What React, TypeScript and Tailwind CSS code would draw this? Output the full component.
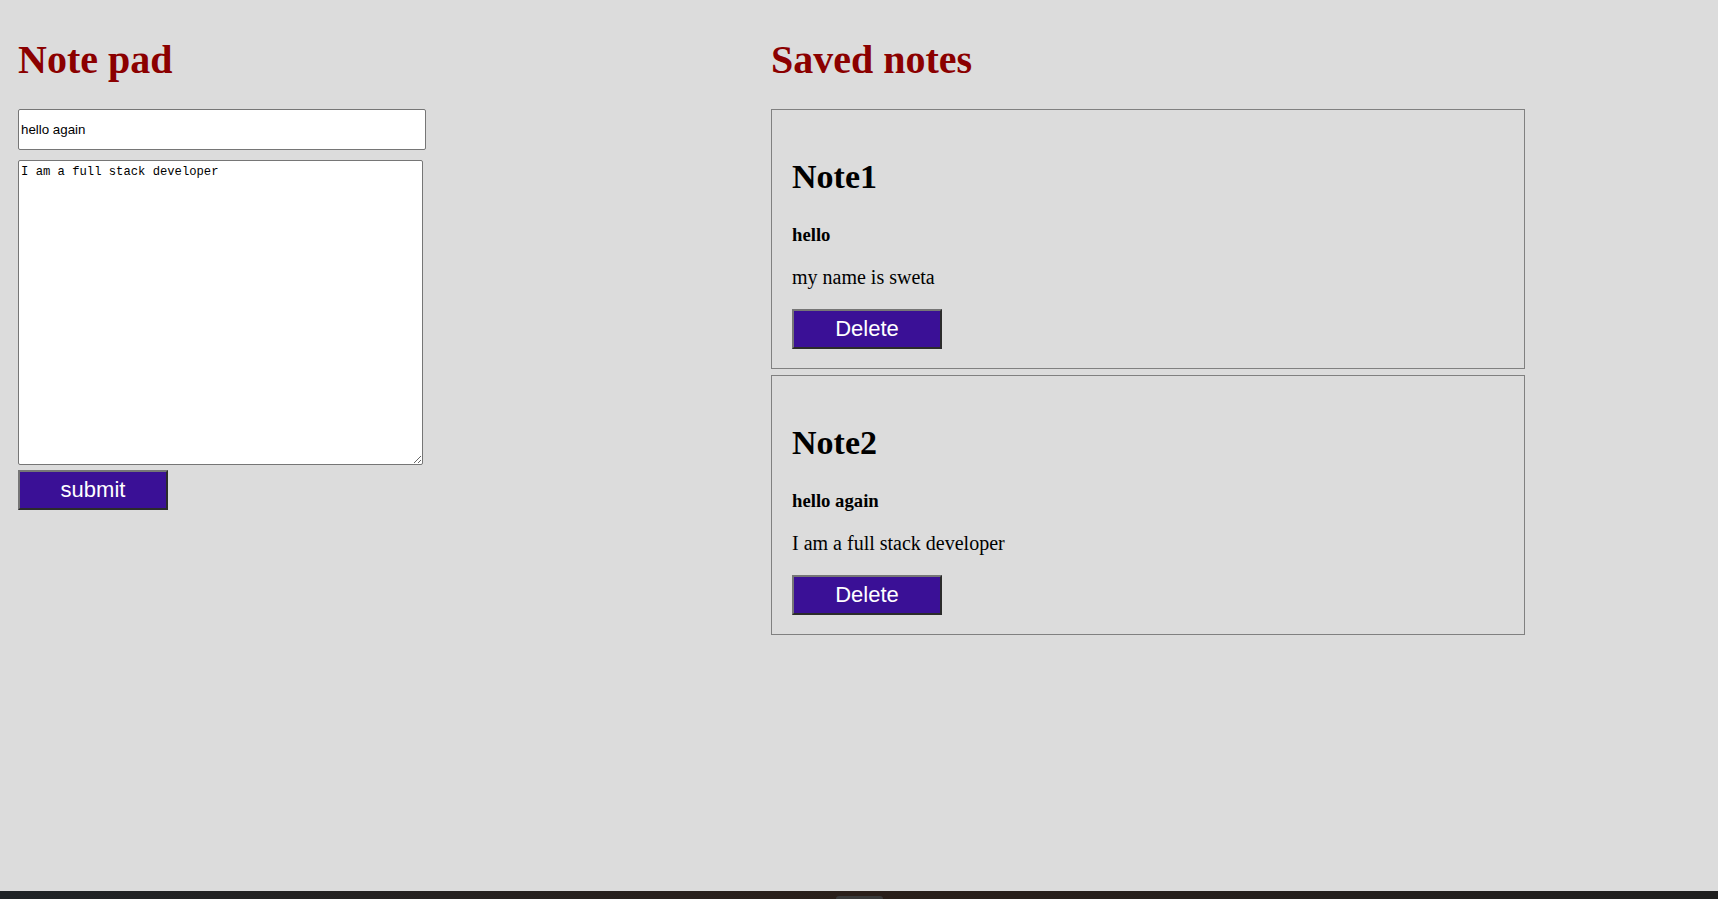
const notes = [
  { id: 1, title: "hello", body: "my name is sweta" },
  { id: 2, title: "hello again", body: "I am a full stack developer" },
];

const serif = "font-['Liberation_Serif','Times_New_Roman',serif]";
const sans = "font-['Liberation_Sans',Arial,sans-serif]";

const PurpleButton = ({ label }: { label: string }) => (
  <button
    type="button"
    className={`${sans} block h-[40px] w-[150px] border-2 border-solid border-t-[#767676] border-l-[#767676] border-b-[#2b2b2b] border-r-[#2b2b2b] bg-[#3a1096] text-[22px] leading-none text-white`}
  >
    {label}
  </button>
);

const NoteCard = ({ index, title, body }: { index: number; title: string; body: string }) => (
  <section className="w-[754px] border border-[#808080] px-[20px] pt-[19px] pb-[19px]">
    <h2 className={`${serif} mt-[29px] text-[34px] font-bold leading-[38px] text-black`}>Note{index}</h2>
    <h3 className={`${serif} mt-[28px] text-[18.72px] font-bold leading-[21px] text-black`}>{title}</h3>
    <p className={`${serif} mt-[21px] text-[20px] leading-[22px] text-black`}>{body}</p>
    <div className="mt-[21px]">
      <PurpleButton label="Delete" />
    </div>
  </section>
);

const App = () => {
  return (
    <div className="flex min-h-screen flex-col bg-[#dcdcdc]">
      <main className="flex flex-1 pt-[38px]">
        <div className="w-[771px] shrink-0 pl-[18px]">
          <h1 className={`${serif} text-[40px] font-bold leading-[44px] text-[#8b0000]`}>Note pad</h1>
          <input
            type="text"
            defaultValue="hello again"
            className={`${sans} mt-[27px] block h-[41px] w-[408px] rounded-[2px] border border-[#767676] bg-white px-[2px] text-[13.33px] text-black outline-none`}
          />
          <textarea
            defaultValue="I am a full stack developer"
            className="mt-[10px] block h-[305px] w-[405px] rounded-[2px] border border-[#767676] bg-white px-[2px] pt-[4px] pb-[2px] font-['Liberation_Mono','Courier_New',monospace] text-[12.2px] leading-[14px] text-black outline-none"
          />
          <div className="mt-[5px]">
            <PurpleButton label="submit" />
          </div>
        </div>

        <div className="flex-1">
          <h1 className={`${serif} text-[40px] font-bold leading-[44px] text-[#8b0000]`}>Saved notes</h1>
          <div className="mt-[27px] flex flex-col gap-[6px]">
            {notes.map((note) => (
              <NoteCard key={note.id} index={note.id} title={note.title} body={note.body} />
            ))}
          </div>
        </div>
      </main>

      <div className="flex h-[8px] justify-center bg-gradient-to-r from-[#1f2326] via-[#2a1f1a] to-[#1f1f1f]">
        <div className="mt-[5px] h-[3px] w-[47px] rounded-t-[3px] bg-[#3a3a3a]" />
      </div>
    </div>
  );
};

export default App;
